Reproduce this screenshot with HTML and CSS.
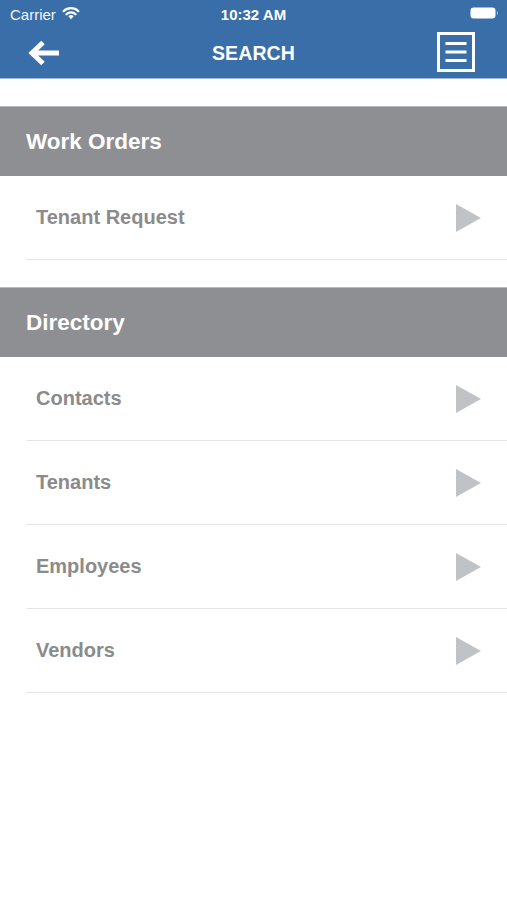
FILE: index.html
```html
<!DOCTYPE html>
<html lang="en">
<head>
<meta charset="utf-8">
<title>Search</title>
<link rel="stylesheet" href="styles.css">
</head>
<body>
<div class="app">
  <header class="topbar">
    <div class="status">
      <div class="status-left">
        <span class="carrier">Carrier</span>
        <svg class="wifi" width="18" height="14" viewBox="0 0 18 14">
          <path d="M9 13.2 L6.3 10.3 A3.9 3.9 0 0 1 11.7 10.3 Z" fill="#fff"/>
          <path d="M4.4 8.3 A6.6 6.6 0 0 1 13.6 8.3" fill="none" stroke="#fff" stroke-width="2.2" stroke-linecap="round"/>
          <path d="M1.6 5.2 A10.6 10.6 0 0 1 16.4 5.2" fill="none" stroke="#fff" stroke-width="2.2" stroke-linecap="round"/>
        </svg>
      </div>
      <span class="time">10:32 AM</span>
      <div class="status-right">
        <svg width="29" height="12" viewBox="0 0 29 12">
          <rect x="0.5" y="0.5" width="25" height="11" rx="3.2" fill="#fff"/>
          <path d="M26.8 4 C28.2 4.3 28.2 7.7 26.8 8 Z" fill="#fff" opacity="0.6"/>
        </svg>
      </div>
    </div>
    <nav class="navbar">
      <svg class="back" width="34" height="28" viewBox="0 0 34 28">
        <path d="M31 14 H5 M15 3.5 L4 14 L15 24.5" fill="none" stroke="#fff" stroke-width="5" stroke-linejoin="miter" stroke-linecap="butt"/>
      </svg>
      <span class="title">SEARCH</span>
      <svg class="menu" width="38" height="40" viewBox="0 0 38 40">
        <rect x="1.5" y="1.5" width="35" height="37" fill="none" stroke="#fff" stroke-width="3"/>
        <path d="M8.5 11.5 H29.5 M8.5 20 H29.5 M8.5 28.5 H29.5" stroke="#fff" stroke-width="2.8"/>
      </svg>
    </nav>
  </header>

  <section class="section">
    <h2 class="section-head">Work Orders</h2>
    <ul class="list">
      <li class="row"><span>Tenant Request</span><span class="arrow"></span></li>
    </ul>
  </section>

  <section class="section">
    <h2 class="section-head">Directory</h2>
    <ul class="list">
      <li class="row"><span>Contacts</span><span class="arrow"></span></li>
      <li class="row"><span>Tenants</span><span class="arrow"></span></li>
      <li class="row"><span>Employees</span><span class="arrow"></span></li>
      <li class="row"><span>Vendors</span><span class="arrow"></span></li>
    </ul>
  </section>
</div>
</body>
</html>
```

FILE: styles.css
```css
* { box-sizing: border-box; }
html, body {
  margin: 0;
  padding: 0;
  background: #ffffff;
}
body {
  font-family: "Liberation Sans", Arial, sans-serif;
  width: 507px;
  height: 900px;
  overflow: hidden;
}
.topbar {
  background: #3a6ea9;
  color: #fff;
  border-bottom: 1px solid #9dbbdc;
}
.status {
  height: 28px;
  display: flex;
  align-items: center;
  justify-content: space-between;
  padding: 0 8px 0 10px;
  position: relative;
}
.status-left {
  display: flex;
  align-items: center;
  gap: 6px;
}
.carrier {
  font-size: 15px;
  color: #f2f6fb;
}
.wifi { margin-top: -2px; }
.time {
  position: absolute;
  left: 0;
  right: 0;
  text-align: center;
  font-size: 15px;
  font-weight: bold;
  pointer-events: none;
}
.status-right {
  display: flex;
  align-items: center;
  margin-top: -2px;
}
.navbar {
  height: 50px;
  display: flex;
  align-items: center;
  justify-content: space-between;
  padding: 0 32px 0 28px;
  position: relative;
}
.back { margin-top: -1px; }
.title {
  position: absolute;
  left: 0;
  right: 0;
  text-align: center;
  font-size: 19.5px;
  font-weight: bold;
  letter-spacing: 0.1px;
  pointer-events: none;
}
.menu { margin-top: -2px; }
.section {
  margin-top: 27px;
}
.section-head {
  margin: 0;
  height: 70px;
  display: flex;
  align-items: center;
  padding-left: 26px;
  background: #8e8f92;
  border-top: 1px solid #b9babd;
  color: #fff;
  font-size: 22.5px;
  font-weight: bold;
}
.list {
  list-style: none;
  margin: 0 0 0 26px;
  padding: 0;
}
.row {
  height: 84px;
  display: flex;
  align-items: center;
  justify-content: space-between;
  padding: 0 26px 0 10px;
  border-bottom: 1px solid #e6e6e6;
  color: #8b8b8b;
  font-size: 20px;
  font-weight: bold;
}
.arrow {
  width: 0;
  height: 0;
  border-top: 14px solid transparent;
  border-bottom: 14px solid transparent;
  border-left: 25px solid #c0c3c6;
}
```
